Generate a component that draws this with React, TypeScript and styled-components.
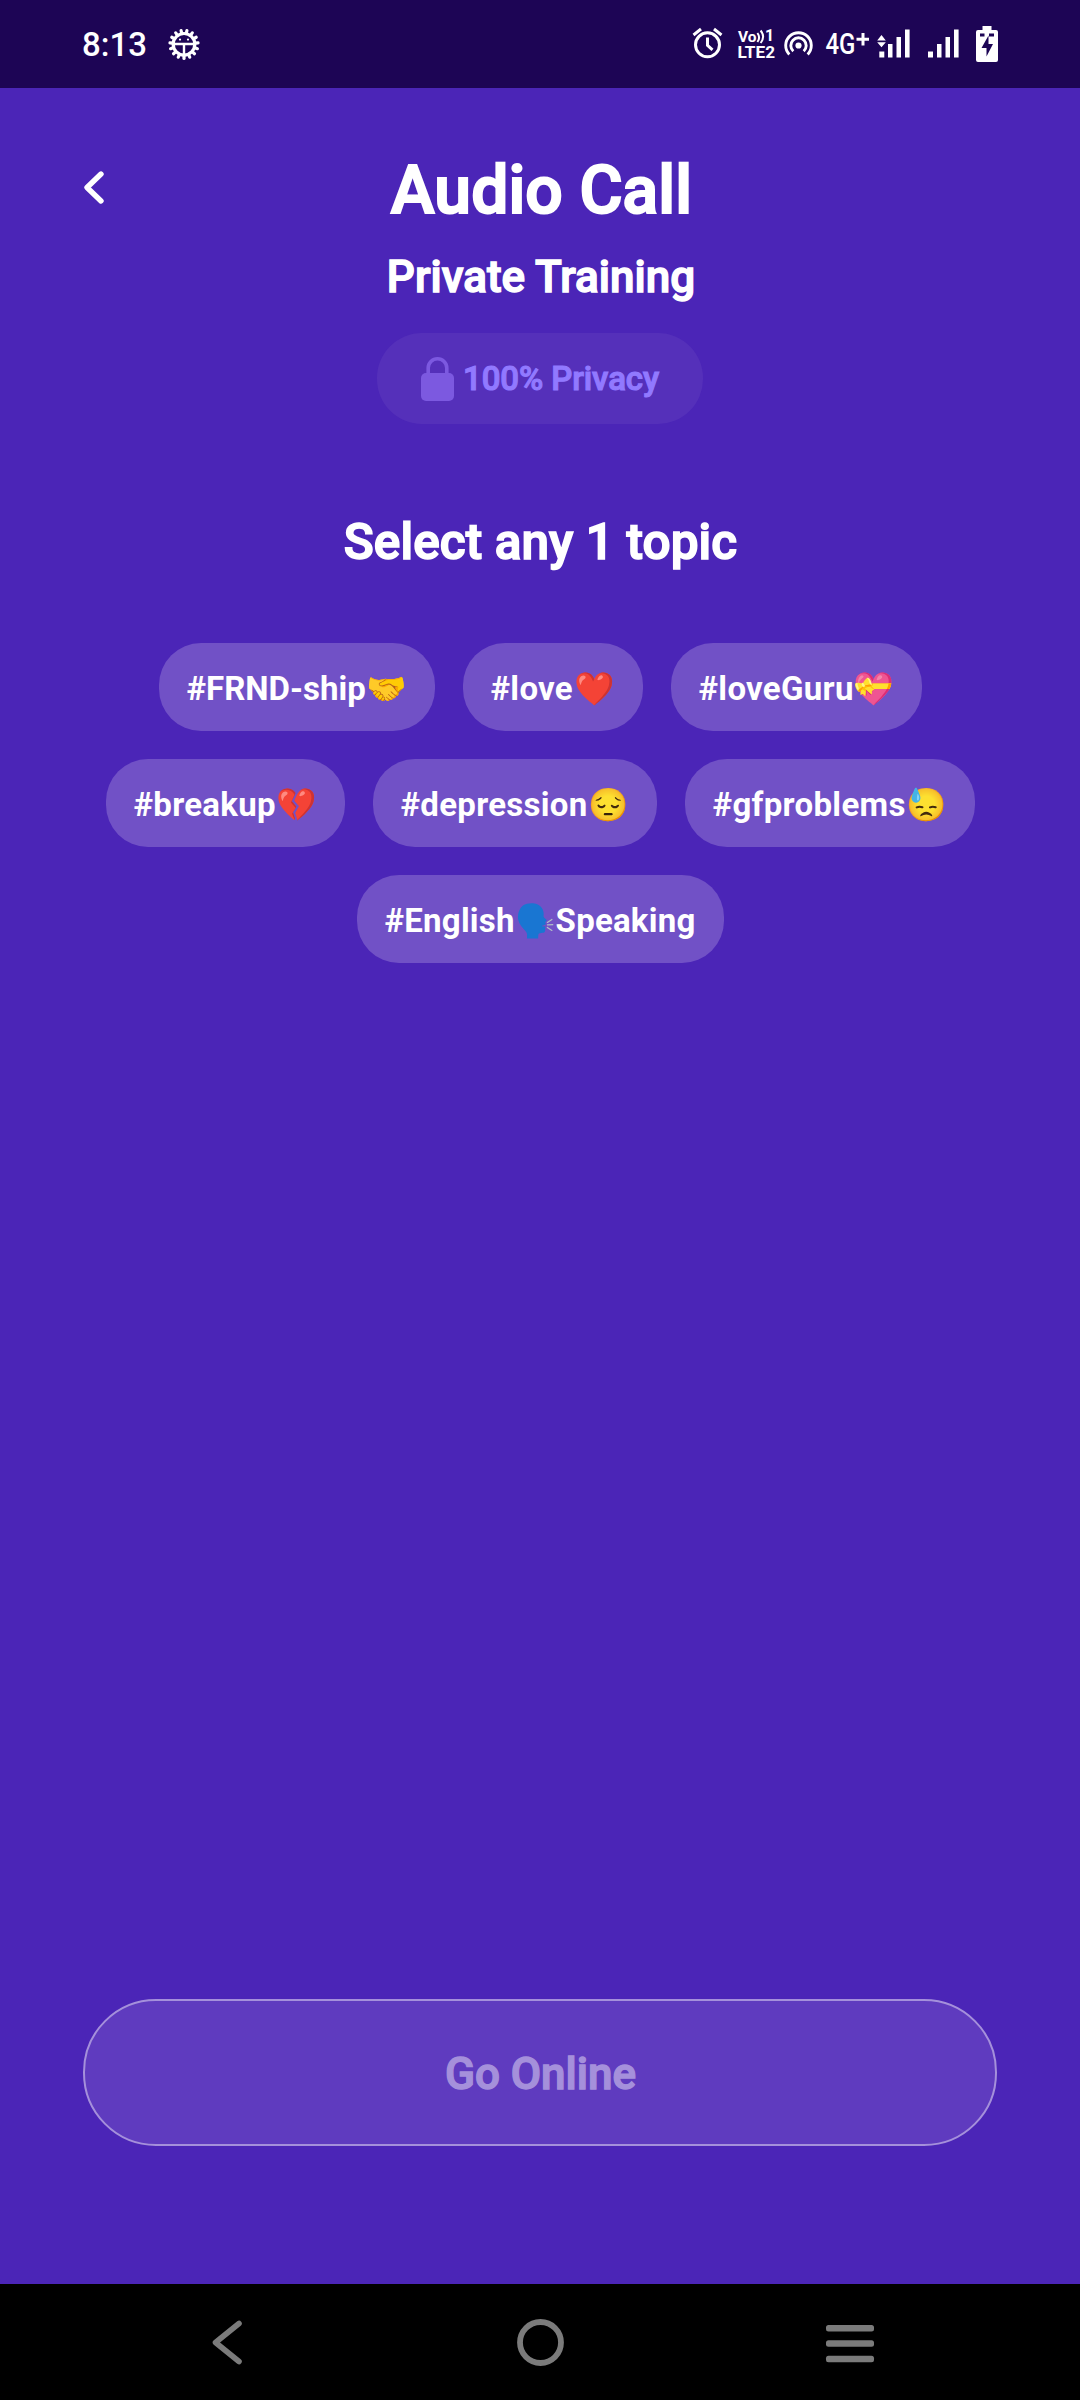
import React from "react";
import styled, { createGlobalStyle } from "styled-components";

const GlobalStyle = createGlobalStyle`
  * { box-sizing: border-box; }
  body { margin: 0; background: #4b25b7; }
`;

const Screen = styled.div`
  width: 1080px;
  height: 2400px;
  display: flex;
  flex-direction: column;
  background: #4b25b7;
  color: #fff;
  font-family: Roboto, "Noto Color Emoji", sans-serif;
  overflow: hidden;
`;

const StatusBar = styled.header`
  height: 88px;
  flex: none;
  display: flex;
  align-items: flex-start;
  justify-content: space-between;
  padding: 22px 82px 0 82px;
  background: #1d0555;
`;

const StatusGroup = styled.div`
  display: flex;
  align-items: flex-start;
`;

const Clock = styled.span`
  width: 84px;
  font-size: 33px;
  font-weight: 500;
  line-height: 46px;
`;

const Icon = styled.svg<{ $gap?: number }>`
  display: block;
  flex: none;
  margin-left: ${(p) => p.$gap ?? 0}px;
  overflow: visible;
`;

const Main = styled.main`
  flex: 1;
  display: flex;
  flex-direction: column;
  padding: 64px 83px 138px;
`;

const TitleRow = styled.div`
  display: grid;
  grid-template-columns: 60px 1fr 60px;
  height: 80px;
`;

const BackButton = styled.button`
  border: 0;
  padding: 18px 0 0;
  background: none;
  display: flex;
  align-items: flex-start;
`;

const Title = styled.h1`
  margin: -1px 0 0;
  padding-left: 3px;
  text-align: center;
  font-size: 66px;
  line-height: 80px;
  font-weight: 500;
  -webkit-text-stroke: 2.1px currentColor;
  letter-spacing: 0.1px;
  white-space: nowrap;
`;

const Subtitle = styled.h2`
  margin: 16px 0 0;
  padding-left: 2px;
  text-align: center;
  font-size: 44px;
  line-height: 58px;
  font-weight: 500;
  -webkit-text-stroke: 1.4px currentColor;
`;

const PrivacyBadge = styled.div`
  align-self: center;
  display: flex;
  align-items: center;
  width: 326px;
  height: 91px;
  margin-top: 27px;
  padding-left: 44px;
  border-radius: 45px;
  background: #5530ba;
`;

const PrivacyText = styled.span`
  margin-left: 8px;
  color: #9179ff;
  font-size: 33px;
  line-height: 42px;
  font-weight: 500;
  -webkit-text-stroke: 1.1px currentColor;
  letter-spacing: -0.1px;
  white-space: nowrap;
`;

const Prompt = styled.h3`
  margin: 88px 0 0;
  padding-left: 1px;
  text-align: center;
  font-size: 49.5px;
  line-height: 60px;
  font-weight: 500;
  -webkit-text-stroke: 1.6px currentColor;
  letter-spacing: 0.1px;
`;

const Topics = styled.div`
  display: flex;
  flex-direction: column;
  gap: 28px;
  margin-top: 71px;
`;

const TopicRow = styled.div`
  display: flex;
  justify-content: center;
  gap: 28px;
`;

const Topic = styled.button<{ $width: number; $tracking: number }>`
  width: ${(p) => p.$width}px;
  height: 88px;
  padding: 3px 28px 0 28px;
  border: 0;
  border-radius: 42px;
  background: #7151c6;
  color: #fff;
  font: 700 33px/40px Roboto, sans-serif;
  letter-spacing: ${(p) => p.$tracking}px;
  display: flex;
  align-items: center;
  justify-content: space-between;
  white-space: nowrap;
`;

const Emoji = styled.span`
  width: 40px;
  display: flex;
  justify-content: center;
  letter-spacing: 0;
  font: 400 32.5px/40px "Noto Color Emoji", sans-serif;
`;

const GoOnline = styled.button`
  margin-top: auto;
  height: 147px;
  padding: 3px 0 0 1px;
  border: 2px solid #a590db;
  border-radius: 73px;
  background: #5f3bbf;
  color: #a590db;
  font: 500 44px/56px Roboto, sans-serif;
  -webkit-text-stroke: 1.4px currentColor;
`;

const NavBar = styled.nav`
  height: 116px;
  flex: none;
  display: flex;
  justify-content: space-between;
  align-items: flex-start;
  padding: 33px 203px 0 211px;
  background: #000;
`;

type TopicItem = { label: string; emoji: string; tail?: string; width: number; tracking: number };

const topicRows: TopicItem[][] = [
  [
    { label: "#FRND-ship", emoji: "🤝", width: 276, tracking: 0 },
    { label: "#love", emoji: "❤️", width: 180, tracking: 0.3 },
    { label: "#loveGuru", emoji: "💝", width: 251, tracking: 0.3 },
  ],
  [
    { label: "#breakup", emoji: "💔", width: 239, tracking: 0.28 },
    { label: "#depression", emoji: "😔", width: 284, tracking: 0.28 },
    { label: "#gfproblems", emoji: "😓", width: 290, tracking: 0.33 },
  ],
  [{ label: "#English", emoji: "🗣️", tail: "Speaking", width: 367, tracking: 0.23 }],
];

const teeth = Array.from({ length: 15 }, (_, i) => i * 24 + 12);

const DebugIcon = () => (
  <Icon $gap={2} width="32" height="46" viewBox="0 0 32 46" fill="none" stroke="#fff">
    {teeth.map((a) => (
      <path key={a} d="M16 11V8.2" strokeWidth="3.2" strokeLinecap="round" transform={`rotate(${a} 16 22.3)`} />
    ))}
    <circle cx="16" cy="22.3" r="10.8" strokeWidth="3.2" />
    <path d="M5 22h22M16 22v11" strokeWidth="2.4" />
    <circle cx="12" cy="17.6" r="1.1" fill="#fff" stroke="none" />
    <circle cx="20" cy="17.6" r="1.1" fill="#fff" stroke="none" />
  </Icon>
);

const AlarmIcon = () => (
  <Icon width="30" height="40" viewBox="0 0 30 40" fill="none" stroke="#fff" strokeWidth="3">
    <circle cx="14.5" cy="22.8" r="12" />
    <path d="M.5 13l7.5-6M28.5 13l-7.5-6" />
    <path d="M14.5 15.5v7.8l5 4.5" />
  </Icon>
);

const VolteIcon = () => (
  <Icon
    $gap={15}
    width="36"
    height="40"
    viewBox="0 0 36 40"
    fill="#fff"
    fontFamily="Roboto, sans-serif"
    fontWeight="700"
  >
    <text x="0" y="20" fontSize="15.5" textLength="18.5" lengthAdjust="spacingAndGlyphs">Vo</text>
    <path d="M19.4 11q3.4 4.5 0 9M22.6 8.5q5 6 0 12.5" fill="none" stroke="#fff" strokeWidth="2" />
    <text x="27" y="19.3" fontSize="15.8">1</text>
    <text x="-.5" y="35.6" fontSize="16.2" textLength="37.5" lengthAdjust="spacingAndGlyphs">LTE2</text>
  </Icon>
);

const HotspotIcon = () => (
  <Icon $gap={10} width="30" height="40" viewBox="0 0 30 40" fill="none" stroke="#fff" strokeWidth="2.9">
    <circle cx="14.5" cy="23.5" r="3.1" fill="#fff" stroke="none" />
    <path d="M9.3 29.2A7.7 7.7 0 1 1 19.7 29.2" />
    <path d="M5.3 32.4A12.8 12.8 0 1 1 23.7 32.4" />
  </Icon>
);

const NetworkIcon = () => (
  <Icon $gap={12} width="44" height="40" viewBox="0 0 44 40" fill="#fff" fontFamily="Roboto, sans-serif" fontWeight="500">
    <text x="-.6" y="31.5" fontSize="29" textLength="30" lengthAdjust="spacingAndGlyphs">4G</text>
    <path d="M37 11v12.5M30.5 17.3h12.5" stroke="#fff" strokeWidth="3" />
  </Icon>
);

const SignalIcon = ({ gap, data }: { gap: number; data?: boolean }) => (
  <Icon $gap={gap} width="32" height="40" viewBox="0 0 32 40" fill="#fff">
    {data && <path d="M-.8 18.5l4.3-5.5 4.3 5.5zM-.8 20.2h8.6l-4.3 5z" />}
    <path d={data ? "M1.3 29.5h5V35.5h-5z" : "M1 29.5h5V35.5h-5z"} />
    <path d="M10 22h4.5v13.5H10zM18.5 15H23v20.5h-4.5zM27 7.5h4.6v28H27z" />
  </Icon>
);

const BatteryIcon = () => (
  <Icon $gap={17} width="22" height="40" viewBox="0 0 22 40">
    <path d="M6.5 4h9v4H20q2 0 2 2v28q0 2-2 2H2q-2 0-2-2V10q0-2 2-2h4.5z" fill="#fff" />
    <path d="M12.5 13.5L5.5 26h5v8.5L17 22h-4.5zM4 11.5h4.5v3H4zM13 11.5h5v3h-5z" fill="#1d0555" />
  </Icon>
);

const LockIcon = () => (
  <Icon width="34" height="45" viewBox="0 0 34 45">
    <path d="M7.2 18V12a9.3 9.3 0 0 1 18.6 0v6" fill="none" stroke="#7c59e0" strokeWidth="3.6" />
    <rect x="0" y="17" width="33" height="28" rx="5" fill="#7c59e0" />
  </Icon>
);

export default function App() {
  return (
    <>
      <GlobalStyle />
      <Screen>
        <StatusBar>
          <StatusGroup>
            <Clock>8:13</Clock>
            <DebugIcon />
          </StatusGroup>
          <StatusGroup>
            <AlarmIcon />
            <VolteIcon />
            <HotspotIcon />
            <NetworkIcon />
            <SignalIcon gap={8} data />
            <SignalIcon gap={17} />
            <BatteryIcon />
          </StatusGroup>
        </StatusBar>
        <Main>
          <TitleRow>
            <BackButton aria-label="Back">
              <Icon width="24" height="36" viewBox="0 0 24 36">
                <path d="M18 4L4 17.5l14 13.5" fill="none" stroke="#fff" strokeWidth="5.4" strokeLinecap="round" strokeLinejoin="round" />
              </Icon>
            </BackButton>
            <Title>Audio Call</Title>
          </TitleRow>
          <Subtitle>Private Training</Subtitle>
          <PrivacyBadge>
            <LockIcon />
            <PrivacyText>100% Privacy</PrivacyText>
          </PrivacyBadge>
          <Prompt>Select any 1 topic</Prompt>
          <Topics>
            {topicRows.map((row, i) => (
              <TopicRow key={i}>
                {row.map((t) => (
                  <Topic key={t.label} $width={t.width} $tracking={t.tracking}>
                    <span>{t.label}</span>
                    <Emoji>{t.emoji}</Emoji>
                    {t.tail && <span>{t.tail}</span>}
                  </Topic>
                ))}
              </TopicRow>
            ))}
          </Topics>
          <GoOnline>Go Online</GoOnline>
        </Main>
        <NavBar>
          <Icon width="34" height="50" viewBox="0 0 34 50" fill="none" stroke="#7b7b7b" strokeWidth="5.6" strokeLinecap="round" strokeLinejoin="round">
            <path d="M28 6.5L4.5 25.5l23.5 19" />
          </Icon>
          <Icon width="50" height="50" viewBox="-4.5 0 50 50" fill="none" stroke="#7b7b7b" strokeWidth="5.8">
            <circle cx="25" cy="25.5" r="20.5" />
          </Icon>
          <Icon width="51" height="50" viewBox="0 0 51 50" fill="#7b7b7b">
            <rect y="8" width="48" height="6.5" rx="2.5" />
            <rect y="23.3" width="48" height="6.5" rx="2.5" />
            <rect y="38.7" width="48" height="6.5" rx="2.5" />
          </Icon>
        </NavBar>
      </Screen>
    </>
  );
}
